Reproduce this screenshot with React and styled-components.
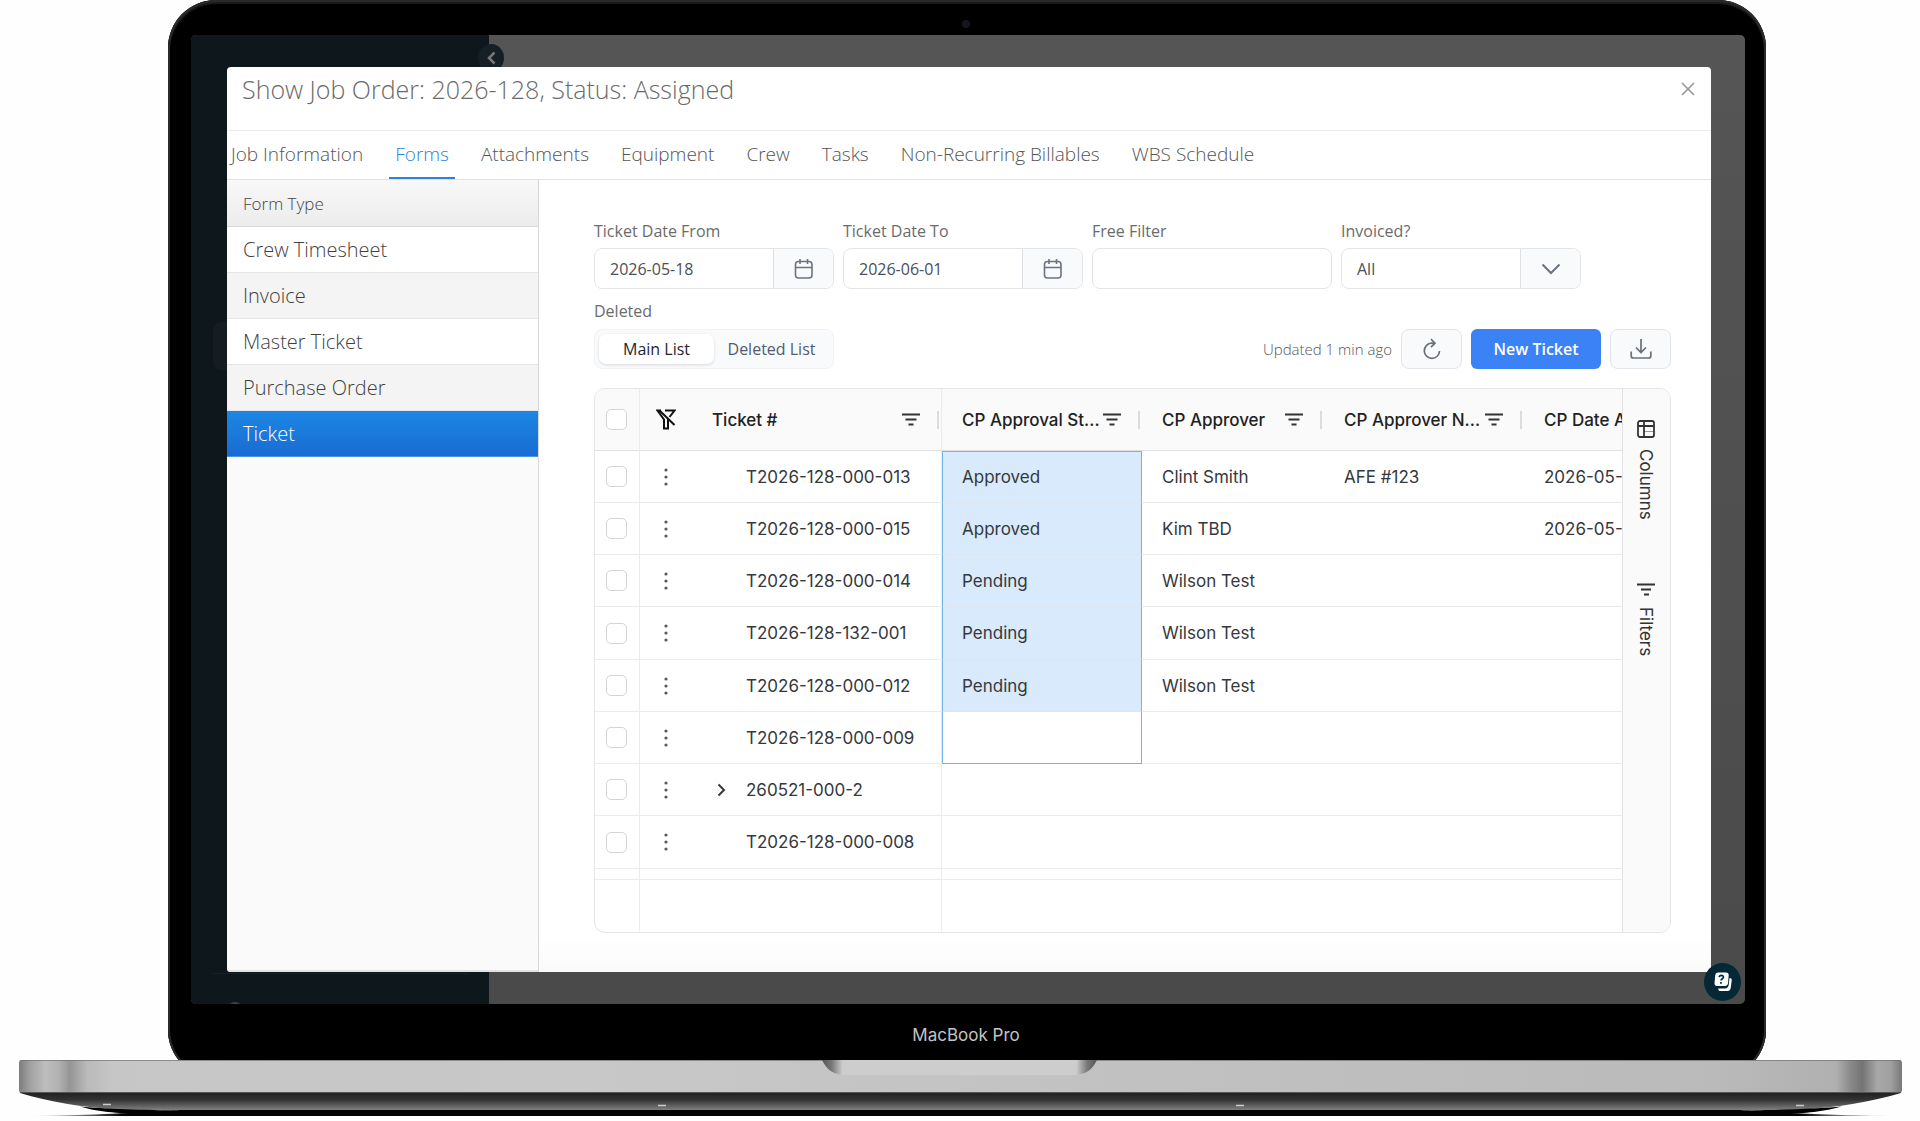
import React from "react";
import styled, { createGlobalStyle, css } from "styled-components";

const GlobalStyle = createGlobalStyle`
  *, *::before, *::after { box-sizing: border-box; }
  body { margin: 0; background: #fefefe; font-family: "Open Sans", sans-serif; color: #555; }
  button, input, select { font: inherit; color: inherit; margin: 0; }
  button { cursor: pointer; }
`;

const inter = css`
  font-family: Inter, sans-serif;
`;

/* ---------- laptop ---------- */

const Page = styled.main`
  min-height: 100vh;
  overflow: hidden;
`;

const Lid = styled.div`
  margin: 0 154px -18px 168px;
  padding: 35px 21px 18px 23px;
  border-radius: 48px;
  background: #000;
  box-shadow: inset 0 0 0 2px #2a2a2a, inset 0 2px 1px 2px #1c1c1c;
  position: relative;
`;

const Camera = styled.span`
  position: absolute;
  top: 20px;
  left: 50%;
  width: 8px;
  height: 8px;
  margin-left: -5px;
  border-radius: 50%;
  background: #15151f;
`;

const Screen = styled.div`
  position: relative;
  padding: 32px 34px 32px 36px;
  border-radius: 5px;
  overflow: hidden;
  background: linear-gradient(#555, #4a4a4a);
`;

const Chin = styled.div`
  ${inter}
  height: 56px;
  padding: 6px 4px 0 0;
  display: flex;
  align-items: center;
  justify-content: center;
  color: #c4c4c4;
  font-size: 17px;
`;

const BaseDrawing = styled.svg`
  display: block;
  position: relative;
  width: 100%;
  height: 61px;
`;

/* ---------- dimmed app behind the dialog ---------- */

const AppSidebar = styled.div`
  position: absolute;
  inset: 0 auto 0 0;
  width: 298px;
  background: #0d171c;
  display: flex;
  flex-direction: column;
  justify-content: space-between;
  padding-top: 287px;
`;

const ActiveItem = styled.div`
  height: 48px;
  margin: 0 22px;
  border-radius: 8px;
  background: #151d21;
`;

const HelpCenter = styled.div`
  margin: 0 20px -20px;
  padding: 22px 0 0 16px;
  display: flex;
  align-items: center;
  gap: 8px;
  border-top: 1px solid #162227;
  color: #36444a;
  font-size: 16px;
  line-height: 28px;
`;

const CollapseButton = styled.button`
  position: absolute;
  top: 9px;
  left: 287px;
  width: 26px;
  height: 28px;
  padding: 0;
  border: 0;
  border-radius: 50%;
  background: #161f25;
  color: #777;
  display: grid;
  place-items: center;
`;

const HelpButton = styled.button`
  position: absolute;
  right: 4px;
  bottom: 3px;
  width: 37px;
  height: 38px;
  padding: 0;
  border: 0;
  border-radius: 50%;
  background: #042836;
  display: grid;
  place-items: center;
`;

/* ---------- dialog ---------- */

const Dialog = styled.section`
  position: relative;
  border-radius: 4px;
  background: #fff;
  overflow: hidden;
`;

const DialogHeader = styled.header`
  height: 64px;
  padding: 0 15px 20px 15px;
  display: flex;
  align-items: center;
  justify-content: space-between;
  border-bottom: 1px solid #ececec;
`;

const Title = styled.h1`
  margin: 0;
  font-size: 25px;
  line-height: 34px;
  font-weight: 300;
  color: #6a6a6a;
`;

const CloseButton = styled.button`
  border: 0;
  padding: 0;
  background: none;
  width: 16px;
  height: 16px;
  color: #999;
  display: grid;
  place-items: center;
`;

const Tabs = styled.nav`
  height: 49px;
  display: flex;
  gap: 20px;
  border-bottom: 1px solid #e2e2e2;
`;

const Tab = styled.a`
  padding: 10px 6px 0;
  font-size: 19px;
  line-height: 26px;
  font-weight: 300;
  white-space: nowrap;
  text-decoration: none;
  color: ${(p) => (p.$active ? "#2b7fe0" : "#555")};
  border-bottom: 2px solid ${(p) => (p.$active ? "#2f7fdc" : "transparent")};
  &:first-child { padding-left: 4px; }
`;

const Body = styled.div`
  display: flex;
`;

const FormTypes = styled.aside`
  flex: 0 0 312px;
  border-right: 1px solid #d8d8d8;
  border-bottom: 2px solid #e2e2e2;
  background: #fafafa;
`;

const FormTypeHeading = styled.h2`
  margin: 0;
  height: 47px;
  padding: 0 16px;
  font-size: 17px;
  line-height: 47px;
  font-weight: 300;
  color: #444;
  background: linear-gradient(#f8f8f8, #ececec);
  border-bottom: 1px solid #d9d9d9;
`;

const FormTypeList = styled.ul`
  list-style: none;
  margin: 0;
  padding: 0;
`;

const FormTypeLink = styled.a`
  display: block;
  height: 46px;
  padding: 0 16px;
  font-size: 20px;
  line-height: 46px;
  font-weight: 300;
  text-decoration: none;
  color: #3f3f3f;
  background: ${(p) => (p.$shaded ? "#f4f4f4" : "#fff")};
  border-bottom: 1px solid #e6e6e6;
  ${(p) =>
    p.$selected &&
    css`
      color: #fff;
      background: linear-gradient(#1c87e5, #196cd2);
      border-bottom-color: #4c93e0;
    `}
`;

const Content = styled.div`
  flex: 1;
  min-width: 0;
  padding: 39px 40px 39px 55px;
  background: linear-gradient(#fff calc(100% - 36px), #fafafa);
`;

/* ---------- filters ---------- */

const Filters = styled.form`
  display: flex;
  flex-wrap: wrap;
  gap: 9px;
`;

const Field = styled.div`
  width: 240px;
`;

const Label = styled.label`
  display: block;
  margin-bottom: 5px;
  font-size: 16px;
  line-height: 24px;
  color: #6b6b6b;
`;

const Control = styled.div`
  display: flex;
  height: 41px;
  border: 1px solid #e3e5e8;
  border-radius: 8px;
  overflow: hidden;
  background: #fff;
`;

const fieldText = css`
  flex: 1;
  min-width: 0;
  width: 100%;
  padding: 0 15px;
  border: 0;
  outline: 0;
  background: none;
  font-size: 16px;
  color: #4a4f59;
`;

const TextInput = styled.input`
  ${fieldText}
`;

const Select = styled.select`
  ${fieldText}
  appearance: none;
`;

const addon = css`
  flex: 0 0 60px;
  padding: 0;
  border: 0;
  border-left: 1px solid #dcdfe3;
  background: #f9fafc;
  color: #6b7280;
  display: grid;
  place-items: center;
`;

const AddonButton = styled.button`
  ${addon}
`;

const SelectArrow = styled.span`
  ${addon}
  pointer-events: none;
`;

/* ---------- toolbar ---------- */

const DeletedLabel = styled.div`
  margin: 10px 0 6px;
  font-size: 16px;
  line-height: 24px;
  color: #6b6b6b;
`;

const Toolbar = styled.div`
  display: flex;
  align-items: center;
  justify-content: space-between;
  margin-bottom: 19px;
`;

const Segmented = styled.div`
  display: flex;
  width: 240px;
  height: 40px;
  padding: 4px;
  border: 1px solid #f0f2f5;
  border-radius: 8px;
  background: #f8fafc;
`;

const Segment = styled.button`
  flex: 1;
  padding: 0;
  border: 0;
  border-radius: 7px;
  font-size: 16px;
  font-weight: 500;
  white-space: nowrap;
  background: ${(p) => (p.$active ? "#fff" : "none")};
  color: ${(p) => (p.$active ? "#1f2433" : "#545b70")};
  box-shadow: ${(p) => (p.$active ? "0 1px 3px rgba(0,0,0,.14)" : "none")};
`;

const Actions = styled.div`
  display: flex;
  align-items: center;
  gap: 9px;
`;

const Updated = styled.span`
  font-size: 15px;
  font-weight: 300;
  color: #555;
`;

const IconButton = styled.button`
  width: 61px;
  height: 40px;
  padding: 0;
  border: 1px solid #e2e5e9;
  border-radius: 8px;
  background: #f9fafc;
  color: #6b7078;
  display: grid;
  place-items: center;
`;

const PrimaryButton = styled.button`
  width: 130px;
  height: 40px;
  padding: 0;
  border: 0;
  border-radius: 6px;
  background: #3b82f6;
  color: #fff;
  font-size: 16px;
  font-weight: 600;
`;

/* ---------- data grid ---------- */

const Grid = styled.div`
  ${inter}
  display: flex;
  border: 1px solid #e6e6e8;
  border-radius: 11px;
  overflow: hidden;
  background: #fff;
  color: #35383d;
`;

const TableArea = styled.div`
  flex: 1;
  min-width: 0;
  overflow: hidden;
`;

const Table = styled.table`
  width: 100%;
  table-layout: fixed;
  border-collapse: separate;
  border-spacing: 0;
  font-size: 17px;
`;

const Col = styled.col`
  width: ${(p) => p.$width};
`;

const line = "#ebebec";

const Th = styled.th`
  height: 62px;
  padding: 0;
  background: #fafafa;
  border-bottom: 1px solid #e0e0e2;
  border-right: ${(p) => (p.$ruled ? `1px solid ${line}` : "0")};
  font-weight: 500;
  text-align: left;
  white-space: nowrap;
  overflow: hidden;
  color: #222;
`;

const HeadCell = styled.div`
  flex: 1;
  display: flex;
  align-items: center;
  height: 61px;
  padding: 0 2px 0 20px;
`;

const HeadLabel = styled.span`
  flex: 1;
`;

const Separator = styled.span`
  width: 2px;
  height: 18px;
  margin-left: 17px;
  background: #dcdcde;
`;

const Row = styled.tr`
  height: 52px;
  &:nth-child(4n) { height: 53px; }
`;

const Td = styled.td`
  padding: ${(p) => (p.$flush ? "0" : "0 0 0 20px")};
  border-bottom: 1px solid ${line};
  border-right: ${(p) => (p.$ruled ? `1px solid ${line}` : "0")};
  white-space: nowrap;
  overflow: hidden;
  ${(p) =>
    p.$range &&
    css`
      padding-left: 19px;
      border-left: 1px solid #74b4e6;
      border-right: 1px solid #74b4e6;
      background: ${p.$range === "end" ? "#fff" : "#d8eafb"};
      border-bottom-color: ${p.$range === "end" ? "#74b4e6" : "#dde6ee"};
      border-top: ${p.$range === "start" ? "1px solid #74b4e6" : "0"};
    `}
`;

const FootCell = styled.td`
  height: ${(p) => (p.$spacer ? "11px" : "52px")};
  padding: 0;
  border-bottom: ${(p) => (p.$spacer ? `1px solid ${line}` : "0")};
  border-right: ${(p) => (p.$ruled ? `1px solid ${line}` : "0")};
`;

const Checkbox = styled.input.attrs({ type: "checkbox" })`
  appearance: none;
  display: block;
  width: 21px;
  height: 21px;
  margin: 0 0 0 11px;
  border: 1px solid #d3d5d9;
  border-radius: 5px;
  background: #fff;
`;

const TicketCell = styled.div`
  display: flex;
  align-items: center;
`;

const CellButton = styled.button`
  flex: 0 0 52px;
  height: 40px;
  padding: 0;
  border: 0;
  background: none;
  color: ${(p) => (p.$strong ? "#111" : "#555a62")};
  display: grid;
  place-items: center;
`;

const ExpandSlot = styled.span`
  width: 34px;
  margin-left: 20px;
  display: flex;
`;

const ExpandButton = styled.button`
  width: 18px;
  height: 18px;
  padding: 0;
  border: 0;
  background: none;
  display: grid;
  place-items: center;
`;

const SidePanel = styled.div`
  flex: 0 0 48px;
  border-left: 1px solid #e3e3e5;
  background: #fafafa;
  padding: 19px 2px 0 0;
  display: flex;
  flex-direction: column;
  gap: 36px;
`;

const SideButton = styled.button`
  writing-mode: vertical-rl;
  height: 127px;
  padding: 12px 0;
  border: 0;
  background: none;
  font-size: 17px;
  color: #333;
  display: flex;
  align-items: center;
  gap: 11px;
`;

/* ---------- icons ---------- */

const stroke = { fill: "none", stroke: "currentColor", strokeWidth: 2, "aria-hidden": true };

const CalendarIcon = () => (
  <svg width="20" height="22" viewBox="0 0 20 22" {...stroke} strokeWidth="1.6">
    <rect x="1.500" y="3.500" width="16.500" height="16.500" rx="3" />
    <path d="M1.500 9.500H18M6 1v5M13.500 1v5" />
  </svg>
);

const ChevronDown = () => (
  <svg width="20" height="12" viewBox="0 0 20 12" {...stroke}>
    <path d="M1.500 1.500 10 10l8.500-8.500" />
  </svg>
);

const CloseIcon = () => (
  <svg width="16" height="16" viewBox="0 0 16 16" {...stroke} strokeWidth="1.700">
    <path d="M2 2l12 12M14 2 2 14" />
  </svg>
);

const RefreshIcon = () => (
  <svg width="20" height="22" viewBox="0 0 20 22" {...stroke} strokeWidth="1.700">
    <path d="M12.500 5.200H9.500A7.600 7.600 0 1 0 17.500 13" />
    <path d="M9 1.200l4 4-4 4" />
  </svg>
);

const DownloadIcon = () => (
  <svg width="22" height="22" viewBox="0 0 22 22" {...stroke} strokeWidth="1.700">
    <path d="M11 1v13M6 9.500l5 5 5-5" />
    <path d="M1.200 13.500V18a2 2 0 0 0 2 2h15.600a2 2 0 0 0 2-2v-4.500" />
  </svg>
);

const ClearFilterIcon = () => (
  <svg width="20" height="21" viewBox="0 0 20 21" {...stroke}>
    <path d="M5 1.500H1.500L8 10.500V19.500h4V9.500" />
    <path d="M3.500 1.500 18.500 16" />
    <path d="M9 1.500h9.500L13.500 8" />
  </svg>
);

const MenuFilterIcon = () => (
  <svg width="18" height="13" viewBox="0 0 18 13" {...stroke} stroke="#333">
    <path d="M0 1.500h18M3.500 6.500h11M6.500 11.500h5" />
  </svg>
);

const DotsIcon = () => (
  <svg width="4" height="18" viewBox="0 0 4 18" fill="currentColor" aria-hidden="true">
    <circle cx="2" cy="2" r="1.600" />
    <circle cx="2" cy="9" r="1.600" />
    <circle cx="2" cy="16" r="1.600" />
  </svg>
);

const ChevronRight = () => (
  <svg width="9" height="14" viewBox="0 0 9 14" {...stroke}>
    <path d="M1.500 1.500 7 7l-5.500 5.500" />
  </svg>
);

const ColumnsIcon = () => (
  <svg width="18" height="18" viewBox="0 0 18 18" {...stroke} strokeWidth="1.800">
    <rect x="1" y="1" width="16" height="16" rx="2" />
    <path d="M1 6h16M7 1v16" />
    <path d="M7 11.500h10" strokeWidth="1" strokeOpacity=".5" />
  </svg>
);

const SideFilterIcon = () => (
  <svg width="18" height="13" viewBox="0 0 18 13" {...stroke}>
    <path d="M0 1.500h18M4 6.500h10M7 11.500h5" />
  </svg>
);

const HelpIcon = () => (
  <svg width="20" height="20" viewBox="0 0 20 20" aria-hidden="true">
    <rect x="1.500" y=".5" width="13.500" height="13.500" rx="3" fill="#fff" transform="skewX(-5) translate(1 0)" />
    <path d="M16.500 6c2 0 2.500 1 2.200 2.600l-1 7.400c-.3 2-1.300 3-3.200 3H8c-2 0-2.800-1-2.800-2.600h6.500c2.500 0 3.600-1.200 4-3.400z" fill="#fff" />
    <path d="M6.200 5.200c.3-2.600 4.400-2.500 4.200 0-.1 1.500-2.200 1.500-2.400 3.300M7.900 10v1.700" fill="none" stroke="#042836" strokeWidth="1.700" />
  </svg>
);

const Base = () => (
  <BaseDrawing viewBox="0 0 1920 61" preserveAspectRatio="none" aria-hidden="true">
    <defs>
      <linearGradient id="metal">
        <stop offset="0" stopColor="#7d7d7d" />
        <stop offset=".006" stopColor="#a2a2a2" />
        <stop offset=".014" stopColor="#bdbdbd" />
        <stop offset=".021" stopColor="#b2b2b2" />
        <stop offset=".027" stopColor="#959595" />
        <stop offset=".036" stopColor="#bababa" />
        <stop offset=".05" stopColor="#c6c6c6" />
        <stop offset=".3" stopColor="#c8c8c8" />
        <stop offset=".9" stopColor="#bababa" />
        <stop offset=".965" stopColor="#b0b0b0" />
        <stop offset=".973" stopColor="#888" />
        <stop offset=".979" stopColor="#747474" />
        <stop offset=".987" stopColor="#a8a8a8" />
        <stop offset=".994" stopColor="#a0a0a0" />
        <stop offset="1" stopColor="#777" />
      </linearGradient>
      <linearGradient id="under" x2="0" y2="1">
        <stop offset="0" stopColor="#222" />
        <stop offset=".4" stopColor="#333" />
        <stop offset="1" stopColor="#808080" />
      </linearGradient>
      <linearGradient id="ground">
        <stop offset="0" stopColor="#000" stopOpacity="0" />
        <stop offset=".05" stopColor="#000" />
        <stop offset=".95" stopColor="#000" />
        <stop offset="1" stopColor="#000" stopOpacity="0" />
      </linearGradient>
      <linearGradient id="notch">
        <stop offset="0" stopColor="#555" />
        <stop offset=".035" stopColor="#777" />
        <stop offset=".075" stopColor="#cdcdcd" />
        <stop offset=".925" stopColor="#cdcdcd" />
        <stop offset=".965" stopColor="#777" />
        <stop offset="1" stopColor="#555" />
      </linearGradient>
    </defs>
    <path d="M30 56C100 55 130 53 180 50H1740C1790 53 1820 55 1892 56Z" fill="url(#ground)" />
    <path d="M20 33H1901C1870 42 1840 47 1800 50H120C80 47 50 42 20 33Z" fill="url(#under)" />
    <path d="M80 46.500C100 49 150 50 176 50.500L160 54H140C110 53 95 51 80 46.500ZM1842 46.500C1820 49 1770 50 1744 50.500L1760 54H1785C1812 53 1825 51 1842 46.500Z" fill="#000" />
    <path d="M19 3q0-3 3-3H1899q3 0 3 3V30q0 3-3 3H22q-3 0-3-3Z" fill="url(#metal)" />
    <path d="M20 .5H1901" stroke="#666" strokeOpacity=".6" />
    <path d="M20 32.500H1901" stroke="#555" />
    <path d="M822 0H1097C1092 10 1086 15 1072 15H847C833 15 827 10 822 0Z" fill="url(#notch)" />
    <path d="M103 44.500h8M658 45.500h8M1236 45.500h8M1796 45.500h8" stroke="#ccc" strokeWidth="1.500" />
  </BaseDrawing>
);

/* ---------- data ---------- */

const tabs = [
  "Job Information",
  "Forms",
  "Attachments",
  "Equipment",
  "Crew",
  "Tasks",
  "Non-Recurring Billables",
  "WBS Schedule",
];

const formTypes = ["Crew Timesheet", "Invoice", "Master Ticket", "Purchase Order", "Ticket"];

const tickets = [
  { id: "T2026-128-000-013", status: "Approved", approver: "Clint Smith", number: "AFE #123", date: "2026-05-", range: "start" },
  { id: "T2026-128-000-015", status: "Approved", approver: "Kim TBD", date: "2026-05-", range: "middle" },
  { id: "T2026-128-000-014", status: "Pending", approver: "Wilson Test", range: "middle" },
  { id: "T2026-128-132-001", status: "Pending", approver: "Wilson Test", range: "middle" },
  { id: "T2026-128-000-012", status: "Pending", approver: "Wilson Test", range: "middle" },
  { id: "T2026-128-000-009", range: "end" },
  { id: "260521-000-2", expandable: true },
  { id: "T2026-128-000-008" },
];

const DateField = ({ id, label, value }) => (
  <Field>
    <Label htmlFor={id}>{label}</Label>
    <Control>
      <TextInput id={id} defaultValue={value} />
      <AddonButton type="button" aria-label={`Pick ${label}`}>
        <CalendarIcon />
      </AddonButton>
    </Control>
  </Field>
);

const HeaderContent = ({ label }) => (
  <HeadCell>
    <HeadLabel>{label}</HeadLabel>
    <MenuFilterIcon />
    <Separator />
  </HeadCell>
);

const TicketTable = () => (
  <Table>
    <colgroup>
      <Col $width="45px" />
      <Col $width="302px" />
      <Col $width="200px" />
      <Col $width="182px" />
      <Col $width="200px" />
      <Col $width="auto" />
    </colgroup>
    <thead>
      <tr>
        <Th $ruled>
          <Checkbox aria-label="Select all tickets" />
        </Th>
        <Th $ruled>
          <TicketCell>
            <CellButton $strong aria-label="Clear filters">
              <ClearFilterIcon />
            </CellButton>
            <HeaderContent label="Ticket #" />
          </TicketCell>
        </Th>
        <Th>
          <HeaderContent label="CP Approval St..." />
        </Th>
        <Th>
          <HeaderContent label="CP Approver" />
        </Th>
        <Th>
          <HeaderContent label="CP Approver N..." />
        </Th>
        <Th>
          <HeadCell>CP Date A</HeadCell>
        </Th>
      </tr>
    </thead>
    <tbody>
      {tickets.map((t) => (
        <Row key={t.id}>
          <Td $flush $ruled>
            <Checkbox aria-label={`Select ${t.id}`} />
          </Td>
          <Td $flush $ruled>
            <TicketCell>
              <CellButton aria-label={`Actions for ${t.id}`}>
                <DotsIcon />
              </CellButton>
              <ExpandSlot>
                {t.expandable && (
                  <ExpandButton aria-label={`Expand ${t.id}`}>
                    <ChevronRight />
                  </ExpandButton>
                )}
              </ExpandSlot>
              {t.id}
            </TicketCell>
          </Td>
          <Td $range={t.range}>{t.status}</Td>
          <Td>{t.approver}</Td>
          <Td>{t.number}</Td>
          <Td>{t.date}</Td>
        </Row>
      ))}
    </tbody>
    <tfoot>
      <tr>
        <FootCell $spacer $ruled />
        <FootCell $spacer $ruled />
        <FootCell $spacer colSpan={4} />
      </tr>
      <tr>
        <FootCell $ruled />
        <FootCell $ruled />
        <FootCell colSpan={4} />
      </tr>
    </tfoot>
  </Table>
);

export default function App() {
  return (
    <Page>
      <GlobalStyle />
      <Lid>
        <Camera />
        <Screen>
          <AppSidebar>
            <ActiveItem />
            <HelpCenter>
              <svg width="16" height="16" viewBox="0 0 16 16" {...stroke}>
                <circle cx="8" cy="8" r="7" />
              </svg>
              Help Center
            </HelpCenter>
          </AppSidebar>
          <CollapseButton aria-label="Collapse sidebar">
            <svg width="9" height="14" viewBox="0 0 9 14" {...stroke} strokeWidth="2.500">
              <path d="M7.500 1.500 2 7l5.500 5.500" />
            </svg>
          </CollapseButton>
          <Dialog role="dialog" aria-labelledby="dialog-title">
            <DialogHeader>
              <Title id="dialog-title">Show Job Order: 2026-128, Status: Assigned</Title>
              <CloseButton aria-label="Close">
                <CloseIcon />
              </CloseButton>
            </DialogHeader>
            <Tabs>
              {tabs.map((t) => (
                <Tab key={t} href="#" $active={t === "Forms"}>
                  {t}
                </Tab>
              ))}
            </Tabs>
            <Body>
              <FormTypes>
                <FormTypeHeading>Form Type</FormTypeHeading>
                <FormTypeList>
                  {formTypes.map((t, i) => (
                    <li key={t}>
                      <FormTypeLink href="#" $shaded={i % 2 === 1} $selected={t === "Ticket"}>
                        {t}
                      </FormTypeLink>
                    </li>
                  ))}
                </FormTypeList>
              </FormTypes>
              <Content>
                <Filters>
                  <DateField id="date-from" label="Ticket Date From" value="2026-05-18" />
                  <DateField id="date-to" label="Ticket Date To" value="2026-06-01" />
                  <Field>
                    <Label htmlFor="free-filter">Free Filter</Label>
                    <Control>
                      <TextInput id="free-filter" />
                    </Control>
                  </Field>
                  <Field>
                    <Label htmlFor="invoiced">Invoiced?</Label>
                    <Control>
                      <Select id="invoiced">
                        <option>All</option>
                      </Select>
                      <SelectArrow>
                        <ChevronDown />
                      </SelectArrow>
                    </Control>
                  </Field>
                </Filters>
                <DeletedLabel id="deleted-label">Deleted</DeletedLabel>
                <Toolbar>
                  <Segmented role="group" aria-labelledby="deleted-label">
                    <Segment $active>Main List</Segment>
                    <Segment>Deleted List</Segment>
                  </Segmented>
                  <Actions>
                    <Updated>Updated 1 min ago</Updated>
                    <IconButton aria-label="Refresh">
                      <RefreshIcon />
                    </IconButton>
                    <PrimaryButton>New Ticket</PrimaryButton>
                    <IconButton aria-label="Download">
                      <DownloadIcon />
                    </IconButton>
                  </Actions>
                </Toolbar>
                <Grid>
                  <TableArea>
                    <TicketTable />
                  </TableArea>
                  <SidePanel>
                    <SideButton>
                      <ColumnsIcon />
                      Columns
                    </SideButton>
                    <SideButton>
                      <SideFilterIcon />
                      Filters
                    </SideButton>
                  </SidePanel>
                </Grid>
              </Content>
            </Body>
          </Dialog>
          <HelpButton aria-label="Help">
            <HelpIcon />
          </HelpButton>
        </Screen>
        <Chin>MacBook Pro</Chin>
      </Lid>
      <Base />
    </Page>
  );
}
